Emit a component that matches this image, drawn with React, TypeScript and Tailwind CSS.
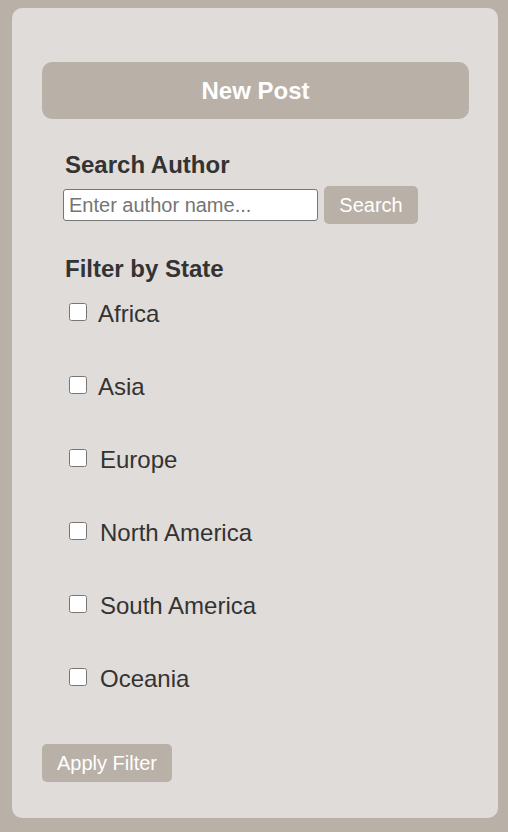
import { FunctionComponent } from "react";

const regions = [
  { name: "Africa", shift: false },
  { name: "Asia", shift: false },
  { name: "Europe", shift: true },
  { name: "North America", shift: true },
  { name: "South America", shift: true },
  { name: "Oceania", shift: true },
];

const App: FunctionComponent = () => {
  return (
    <div
      className="min-h-[832px] w-full bg-[#b9b0a7] pl-[12px] pr-[10px] pt-[8px] pb-[14px] text-[#333333]"
      style={{ fontFamily: '"Liberation Sans", Arial, sans-serif' }}
    >
      <div className="flex h-[810px] flex-col rounded-[10px] bg-[#e0dcd9] px-[30px] pt-[54px]">
        <button className="h-[57px] w-[427px] rounded-[10px] bg-[#b9b0a7] text-[24px] font-bold leading-[28px] text-white">
          New Post
        </button>

        <div className="mt-[32px] flex flex-col pl-[21px]">
          <h3 className="ml-[2px] text-[24px] font-bold leading-[28px]">Search Author</h3>
          <div className="mt-[7px] flex h-[38px] items-center">
            <input
              type="text"
              placeholder="Enter author name..."
              className="h-[32px] w-[255px] rounded-[3px] border border-[#767676] bg-white px-[5px] text-[20px] text-[#333333] placeholder:text-[#757575] outline-none"
            />
            <button className="ml-[6px] h-[38px] w-[94px] rounded-[5px] bg-[#b9b0a7] text-[20px] leading-[23px] text-white">
              Search
            </button>
          </div>

          <h3 className="ml-[2px] mt-[31px] text-[24px] font-bold leading-[28px]">Filter by State</h3>
          <div className="ml-[2px] mt-[17px] flex flex-col gap-[45px]">
            {regions.map((r) => (
              <label key={r.name} className="flex h-[28px] items-start">
                <input type="checkbox" className="ml-[4px] mt-[3px] h-[18px] w-[18px]" />
                <span className={r.shift ? "ml-[13px] text-[24px] leading-[28px]" : "ml-[11px] text-[24px] leading-[28px]"}>
                  {r.name}
                </span>
              </label>
            ))}
          </div>
        </div>

        <div className="mt-[51px]">
          <button className="h-[38px] w-[130px] rounded-[5px] bg-[#b9b0a7] text-[20px] leading-[23px] text-white">
            Apply Filter
          </button>
        </div>
      </div>
    </div>
  );
};

export default App;
